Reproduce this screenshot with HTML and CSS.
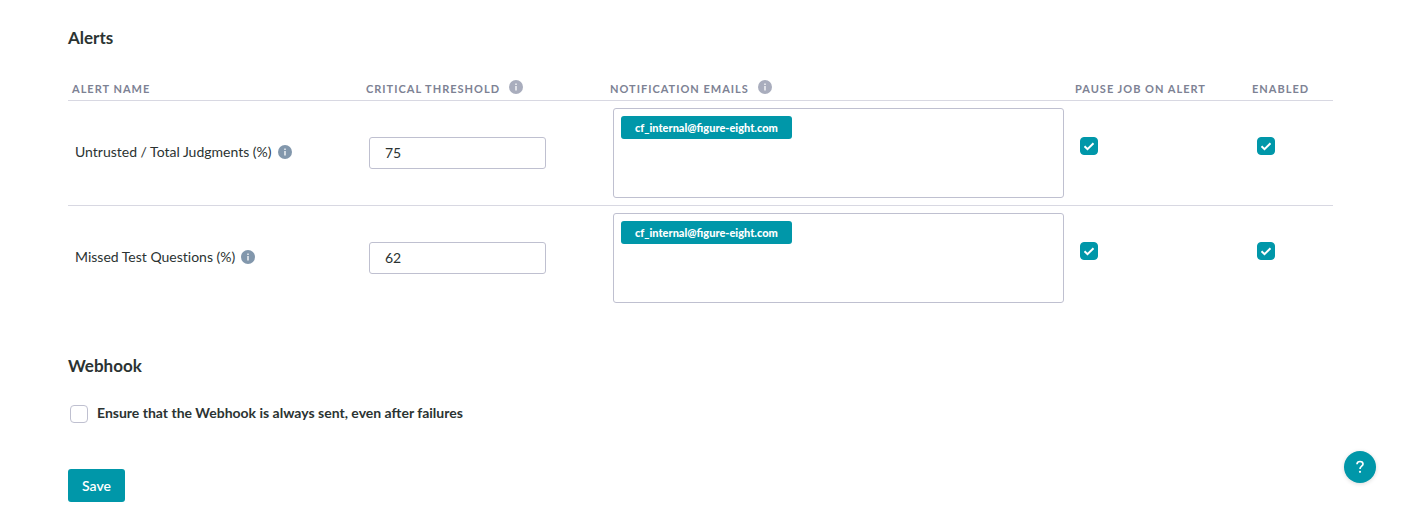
FILE: index.html
```html
<!DOCTYPE html>
<html lang="en">
<head>
<meta charset="utf-8">
<title>Alerts</title>
<link rel="stylesheet" href="styles.css">
</head>
<body>
<svg class="sprite" aria-hidden="true">
  <symbol id="info" viewBox="0 0 14 14">
    <circle cx="7" cy="7" r="7" fill="currentColor"/>
    <path d="M6.2 3.4h1.6v1.5H6.2zM6.2 6h1.6v4.4H6.2z" fill="#fff" fill-opacity=".8"/>
  </symbol>
</svg>
<form class="settings">
  <section>
    <h2 class="title">Alerts</h2>
    <table class="alerts">
      <colgroup>
        <col class="col-name"><col class="col-threshold"><col><col class="col-pause"><col class="col-enabled">
      </colgroup>
      <thead>
        <tr>
          <th scope="col">Alert name</th>
          <th scope="col"><span class="head">Critical threshold <svg class="info"><use href="#info"/></svg></span></th>
          <th scope="col"><span class="head">Notification emails <svg class="info"><use href="#info"/></svg></span></th>
          <th scope="col">Pause job on alert</th>
          <th scope="col">Enabled</th>
        </tr>
      </thead>
      <tbody>
        <tr>
          <td class="name-cell"><span class="name"><label for="untrusted">Untrusted / Total Judgments (%)</label><svg class="info info-row"><use href="#info"/></svg></span></td>
          <td><input class="field" id="untrusted" type="text" value="75"></td>
          <td><div class="emails"><span class="chip">cf_internal@figure-eight.com</span><input class="email-entry" type="email" aria-label="Add notification email"></div></td>
          <td class="toggle"><input class="check" type="checkbox" checked aria-label="Pause job on untrusted judgments alert"></td>
          <td class="toggle"><input class="check" type="checkbox" checked aria-label="Enable untrusted judgments alert"></td>
        </tr>
        <tr>
          <td class="name-cell"><span class="name"><label for="missed">Missed Test Questions (%)</label><svg class="info info-row"><use href="#info"/></svg></span></td>
          <td><input class="field" id="missed" type="text" value="62"></td>
          <td><div class="emails"><span class="chip">cf_internal@figure-eight.com</span><input class="email-entry" type="email" aria-label="Add notification email"></div></td>
          <td class="toggle"><input class="check" type="checkbox" checked aria-label="Pause job on missed questions alert"></td>
          <td class="toggle"><input class="check" type="checkbox" checked aria-label="Enable missed questions alert"></td>
        </tr>
      </tbody>
    </table>
  </section>
  <section class="webhook">
    <h2 class="title">Webhook</h2>
    <label class="option"><input class="check" type="checkbox">Ensure that the Webhook is always sent, even after failures</label>
  </section>
  <button class="save" type="button">Save</button>
</form>
<button class="help" type="button" aria-label="Help">
  <svg class="help-icon" viewBox="0 0 10 14"><path d="M2 4.2C2 2.5 3.2 1.5 5 1.5S8 2.5 8 4.1C8 6.2 5 6.3 5 9" fill="none" stroke="#fff" stroke-width="1.7"/><circle cx="5" cy="11.8" r="1.1" fill="#fff"/></svg>
</button>
</body>
</html>
```
FILE: styles.css
```css
* {
  box-sizing: border-box;
}

body {
  margin: 0;
  background: #fff;
  color: #2b3332;
  font-family: Lato, "Open Sans", sans-serif;
  font-size: 14px;
  line-height: 20px;
}

input,
button {
  font: inherit;
  color: inherit;
}

.sprite {
  position: absolute;
  width: 0;
  height: 0;
}

.settings {
  padding: 26px 68px 6px;
}

.title {
  margin: 0;
  font-size: 17px;
  font-weight: 700;
  line-height: 24px;
}

.alerts {
  width: 100%;
  margin-top: 28px;
  table-layout: fixed;
  border-collapse: separate;
  border-spacing: 0;
}

.col-name { width: 294px; }
.col-threshold { width: 244px; }
.col-pause { width: 177px; }
.col-enabled { width: 85px; }

th {
  height: 23px;
  padding: 0 4px;
  border-bottom: 1px solid #d8d8e2;
  color: #7d8294;
  font-size: 11px;
  font-weight: 700;
  line-height: 22px;
  letter-spacing: 1px;
  text-align: left;
  text-transform: uppercase;
  vertical-align: top;
  white-space: nowrap;
}

.head {
  display: flex;
  gap: 9px;
}

.info {
  flex: none;
  width: 14px;
  height: 14px;
  color: #a9adbd;
}

.head .info {
  margin-top: 2px;
}

.info-row {
  color: #8297ac;
}

td {
  padding: 7px;
  vertical-align: middle;
}

tbody tr:not(:last-child) td {
  border-bottom: 1px solid #d8d8e2;
}

.name-cell {
  padding: 6px 7px 8px;
}

.name {
  display: flex;
  align-items: center;
  gap: 6px;
  font-variant-ligatures: none;
}

.field {
  display: block;
  width: 177px;
  height: 32px;
  padding: 0 15px 2px;
  border: 1px solid #bfc0d0;
  border-radius: 3px;
  background: #fff;
}

.emails {
  display: flex;
  flex-wrap: wrap;
  align-content: flex-start;
  min-height: 90px;
  padding: 7px;
  border: 1px solid #bfc0d0;
  border-radius: 3px;
}

.chip {
  padding: 0 14px;
  border-radius: 3px;
  background: #0097a9;
  color: #fff;
  font-size: 11px;
  font-weight: 900;
  line-height: 23px;
}

.email-entry {
  flex: 1;
  min-width: 80px;
  padding: 0 8px;
  border: 0;
  outline: 0;
  background: none;
}

.toggle {
  padding: 36px 9px;
  vertical-align: top;
}

.check {
  display: block;
  flex: none;
  width: 18px;
  height: 18px;
  margin: 0;
  appearance: none;
  border: 1px solid #bfc0d0;
  border-radius: 4px;
  background: #fff;
}

.check:checked {
  border-color: #0097a9;
  background: #0097a9 url("data:image/svg+xml,%3Csvg xmlns='http://www.w3.org/2000/svg' viewBox='0 0 16 16'%3E%3Cpath d='M3.5 8.2l3 3 6-6' fill='none' stroke='white' stroke-width='2'/%3E%3C/svg%3E") center / 16px no-repeat;
}

.webhook {
  margin-top: 44px;
}

.option {
  display: flex;
  align-items: center;
  gap: 9px;
  margin-top: 25px;
  padding-left: 2px;
  font-weight: 700;
}

.option .check {
  margin-top: 1px;
}

.save {
  display: block;
  height: 33px;
  margin-top: 46px;
  padding: 0 14px;
  border: 0;
  border-radius: 3px;
  background: #0097a9;
  color: #fff;
  font-weight: 600;
}

.help {
  position: fixed;
  right: 25px;
  bottom: 25px;
  display: flex;
  align-items: center;
  justify-content: center;
  width: 32px;
  height: 32px;
  padding: 0;
  border: 0;
  border-radius: 50%;
  background: #0097a9;
  box-shadow: 0 1px 4px rgba(0, 0, 0, 0.15);
}

.help-icon {
  width: 10px;
  height: 14px;
}
```
